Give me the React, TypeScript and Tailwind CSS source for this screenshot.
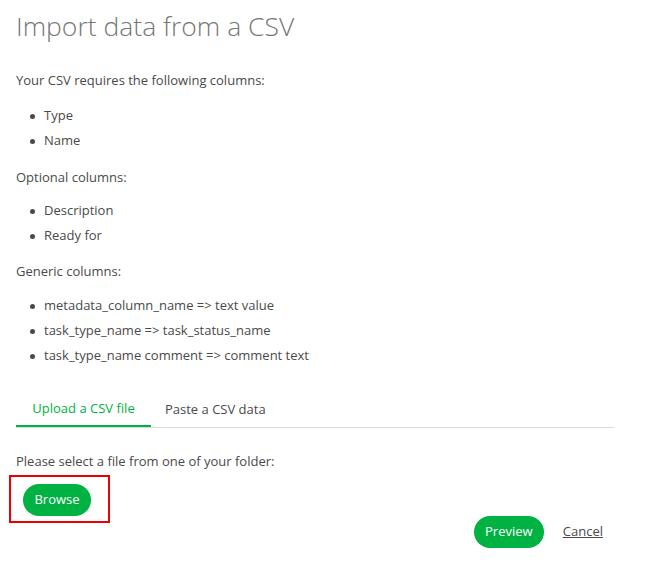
const required = ["Type", "Name"];
const optional = ["Description", "Ready for"];
const generic = [
  "metadata_column_name => text value",
  "task_type_name => task_status_name",
  "task_type_name comment => comment text",
];

function Bullets({ items }: { items: string[] }) {
  return (
    <ul className="flex flex-col gap-[5px] pl-[27px]">
      {items.map((item) => (
        <li key={item} className="flex h-[20px] items-center">
          <span className="mr-[9px] ml-[-13px] h-[5px] w-[5px] rounded-full bg-[#4a4a4a]" />
          {item}
        </li>
      ))}
    </ul>
  );
}

export default function App() {
  return (
    <div
      className="w-[648px] h-[577px] bg-white px-4 pt-[8px] text-[13px] text-[#4a4a4a]"
      style={{ fontFamily: '"Open Sans", "Noto Sans", sans-serif' }}
    >
      <h1 className="text-[26.5px] font-light leading-[36px] text-[#777]">Import data from a CSV</h1>

      <div className="mt-[26px] flex flex-col">
        <p className="h-[20px] leading-[20px]">Your CSV requires the following columns:</p>
        <div className="mt-[16px]">
          <Bullets items={required} />
        </div>
        <p className="mt-[16px] h-[20px] leading-[20px]">Optional columns:</p>
        <div className="mt-[14px]">
          <Bullets items={optional} />
        </div>
        <p className="mt-[15px] h-[20px] leading-[20px]">Generic columns:</p>
        <div className="mt-[15px]">
          <Bullets items={generic} />
        </div>
      </div>

      <div className="mt-[27px] flex w-[598px] border-b border-[#dbdbdb]">
        <div className="mb-[-1px] flex h-[34px] w-[135px] items-center justify-center border-b-2 border-[#00b242] text-[#00b242]">
          Upload a CSV file
        </div>
        <div className="flex h-[34px] items-center px-[14px]">Paste a CSV data</div>
      </div>

      <p className="mt-[23px] h-[20px] leading-[20px]">Please select a file from one of your folder:</p>

      <div className="mt-[4px] ml-[-7px] flex h-[48px] w-[101px] border-2 border-[#ee0000] pl-[12px] pt-[7px]">
        <button className="h-[32px] w-[68px] rounded-full bg-[#00b242] text-white">Browse</button>
      </div>

      <div className="mt-[-7px] flex items-center justify-end gap-[19px] pr-[29px]">
        <button className="h-[32px] w-[70px] rounded-full bg-[#00b242] text-white">Preview</button>
        <a className="text-[#4a4a4a] underline">Cancel</a>
      </div>
    </div>
  );
}
